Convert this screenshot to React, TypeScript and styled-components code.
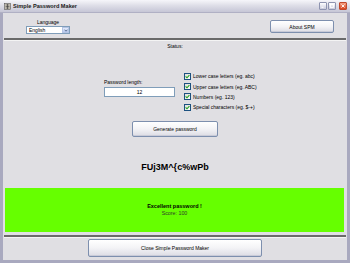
import React from 'react';
import styled, { createGlobalStyle } from 'styled-components';

const Global = createGlobalStyle`
  html, body { margin: 0; padding: 0; }
  body {
    width: 350px; height: 263px; overflow: hidden;
    font-family: "Liberation Sans", Arial, sans-serif;
    color: #000;
  }
`;

const Window = styled.div`
  width: 350px; height: 263px; box-sizing: border-box;
  display: flex; flex-direction: column;
  background: #a9a9bf;
`;

const TitleBar = styled.div`
  height: 13px; flex: none;
  display: flex; align-items: center;
  padding: 0 3px 0 4px;
  background: linear-gradient(#f6f6fa 0%, #dcdce6 50%, #c6c6d6 100%);
  border-bottom: 1px solid #b0b0c4;
  box-sizing: border-box;
`;

const TitleText = styled.span`
  font-family: "Liberation Sans", Arial, sans-serif;
  font-weight: bold;
  font-size: 5.6px;
  margin-left: 2px;
  color: #1a1a1a;
  flex: 1;
`;

const CtrlButton = styled.div<{ $close?: boolean }>`
  width: 8px; height: 8px; box-sizing: border-box;
  border: 1px solid ${p => (p.$close ? '#c0482c' : '#8e94b0')};
  border-radius: 1px;
  background: ${p => (p.$close ? 'linear-gradient(#f4a083, #d8451f)' : 'linear-gradient(#ffffff, #c8cadc)')};
  margin-left: ${p => (p.$close ? '3px' : '1px')};
  display: flex; align-items: center; justify-content: center;
`;

const Body = styled.div`
  flex: 1;
  margin: 0 3px 3px 3px;
  background: #e0dfe3;
  display: flex; flex-direction: column;
`;

const TopRow = styled.div`
  display: flex; justify-content: space-between; align-items: flex-start;
  padding: 6px 13px 0 23px;
`;

const LangGroup = styled.div`
  width: 44px;
  display: flex; flex-direction: column; align-items: center;
`;

const SmallText = styled.div`
  font-size: 5px; line-height: 7px; white-space: nowrap;
`;

const Select = styled.div`
  width: 44px; height: 8px; box-sizing: border-box;
  border: 1px solid #7f9db9; background: #fff;
  display: flex; align-items: center; justify-content: space-between;
  font-size: 5px; padding-left: 2px;
`;

const DropArrow = styled.div`
  width: 7px; height: 6px; box-sizing: border-box;
  background: linear-gradient(#e4ecfb, #b8c8ee);
  border: 1px solid #b4c4e4;
  display: flex; align-items: center; justify-content: center;
`;

const Button = styled.div<{ $w: number; $h: number }>`
  width: ${p => p.$w}px; height: ${p => p.$h}px; box-sizing: border-box;
  border: 1px solid #7d8fae;
  border-radius: 2px;
  background: linear-gradient(#ffffff 0%, #f3f3f6 50%, #dcdce4 100%);
  box-shadow: inset 0 -1px 0 #c9cbd8;
  display: flex; align-items: center; justify-content: center;
  font-size: 5px; white-space: nowrap;
`;

const Separator = styled.div<{ $top: number }>`
  height: 2px; margin: ${p => p.$top}px 1px 0 1px;
  background: #6a6a6a;
  border-bottom: 1px solid #f4f4f4;
`;

const Status = styled(SmallText)`
  text-align: center; margin-top: 2px;
`;

const Options = styled.div`
  display: flex; margin-top: 21px; padding-left: 101px; gap: 9px;
`;

const LengthGroup = styled.div`
  width: 71px; padding-top: 8px;
  display: flex; flex-direction: column;
`;

const Input = styled.div`
  height: 10px; box-sizing: border-box; margin-top: 1px;
  border: 1px solid #7f9db9; background: #fff;
  display: flex; align-items: center; justify-content: center;
  font-size: 5px;
`;

const CheckList = styled.div`
  display: flex; flex-direction: column;
`;

const CheckRow = styled.div`
  height: 10.4px; display: flex; align-items: center; gap: 2px;
  font-size: 5px; white-space: nowrap;
`;

const Box = styled.div`
  width: 7px; height: 7px; box-sizing: border-box;
  border: 1px solid #1c5180;
  background: linear-gradient(135deg, #dcdcd7, #fff);
  display: flex; align-items: center; justify-content: center;
`;

const Centered = styled.div<{ $top: number }>`
  display: flex; justify-content: center; margin-top: ${p => p.$top}px;
`;

const Password = styled.div`
  text-align: center; margin-top: 24px;
  font-size: 9px; line-height: 12px; font-weight: bold;
  font-family: "Liberation Sans", Arial, sans-serif;
`;

const ScoreBox = styled.div`
  height: 44px; margin: 15px 3px 0 2px;
  background: #66ff00;
  display: flex; flex-direction: column; align-items: center; justify-content: center;
`;

const Verdict = styled.div`
  font-size: 5.5px; line-height: 7px; font-weight: bold;
`;

const Score = styled.div`
  font-size: 5.3px; line-height: 7px; color: #2f3a2a;
`;

const Check = () => (
  <svg width="5" height="5" viewBox="0 0 5 5">
    <path d="M0.6 2.4 L2 3.8 L4.4 1.2" fill="none" stroke="#21a121" strokeWidth="1.1" />
  </svg>
);

const options = [
  'Lower case letters (eg. abc)',
  'Upper case letters (eg. ABC)',
  'Numbers (eg. 123)',
  'Special characters (eg. $-+)',
];

export default function App() {
  return (
    <>
      <Global />
      <Window>
        <TitleBar>
          <svg width="7" height="7" viewBox="0 0 7 7">
            <rect x="0.5" y="0.5" width="6" height="6" fill="#d8d2c4" stroke="#555" strokeWidth="0.6" />
            <path d="M1.5 2 H5.5 M1.5 3.5 H5.5 M1.5 5 H5.5 M3.5 1 V6" stroke="#333" strokeWidth="0.6" />
          </svg>
          <TitleText>Simple Password Maker</TitleText>
          <CtrlButton>
            <svg width="4" height="4" viewBox="0 0 4 4"><path d="M0.5 3.3 H2.5" stroke="#fff" strokeWidth="1" /></svg>
          </CtrlButton>
          <CtrlButton>
            <svg width="4" height="4" viewBox="0 0 4 4"><rect x="0.5" y="0.5" width="3" height="3" fill="none" stroke="#fff" strokeWidth="0.8" /></svg>
          </CtrlButton>
          <CtrlButton $close>
            <svg width="4" height="4" viewBox="0 0 4 4"><path d="M0.5 0.5 L3.5 3.5 M3.5 0.5 L0.5 3.5" stroke="#fff" strokeWidth="0.9" /></svg>
          </CtrlButton>
        </TitleBar>
        <Body>
          <TopRow>
            <LangGroup>
              <SmallText>Language</SmallText>
              <Select>
                <span>English</span>
                <DropArrow>
                  <svg width="4" height="3" viewBox="0 0 4 3"><path d="M0.5 0.7 L2 2.2 L3.5 0.7" fill="none" stroke="#4d6185" strokeWidth="0.9" /></svg>
                </DropArrow>
              </Select>
            </LangGroup>
            <div style={{ marginTop: 1 }}>
              <Button $w={64} $h={13}>About SPM</Button>
            </div>
          </TopRow>
          <Separator $top={4} />
          <Status>Status:</Status>
          <Options>
            <LengthGroup>
              <SmallText>Password length:</SmallText>
              <Input>12</Input>
            </LengthGroup>
            <CheckList>
              {options.map(o => (
                <CheckRow key={o}>
                  <Box><Check /></Box>
                  <span>{o}</span>
                </CheckRow>
              ))}
            </CheckList>
          </Options>
          <Centered $top={8}>
            <Button $w={86} $h={16}>Generate password</Button>
          </Centered>
          <Password>FUj3M^{'{'}c%wPb</Password>
          <ScoreBox>
            <Verdict>Excellent password !</Verdict>
            <Score>Score: 100</Score>
          </ScoreBox>
          <Separator $top={3} />
          <Centered $top={1}>
            <Button $w={174} $h={18}>Close Simple Password Maker</Button>
          </Centered>
        </Body>
      </Window>
    </>
  );
}
